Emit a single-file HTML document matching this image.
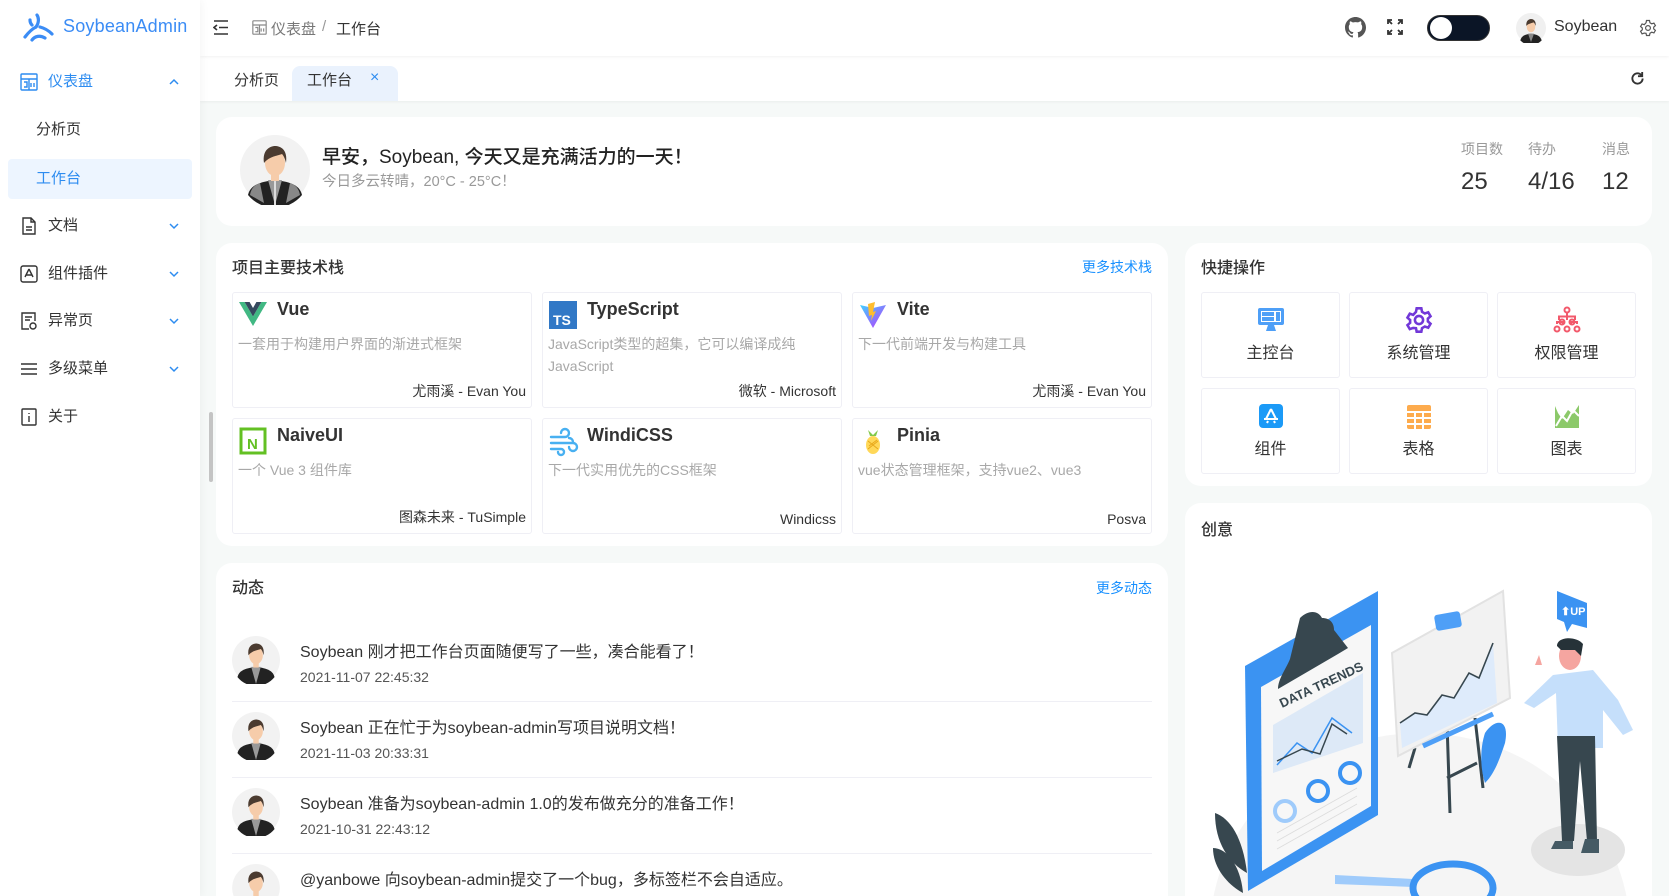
<!DOCTYPE html>
<html style="width:1669px;height:896px;overflow:hidden"><head><meta charset="utf-8">
<style>
*{box-sizing:border-box;margin:0;padding:0}
body{width:1669px;height:896px;overflow:hidden;background:#f6f9f8;font-family:"Liberation Sans","Noto Sans CJK SC",sans-serif;color:#333;position:relative;font-size:15px}
.a{position:absolute}
.side{left:0;top:0;width:200px;height:896px;background:#fff;box-shadow:2px 0 8px rgba(0,0,0,.04);z-index:3}
.mi{position:absolute;left:0;width:200px;height:40px;line-height:40px;font-size:15px;color:#333}
.mi .t{position:absolute;left:48px}
.mi svg.ic{position:absolute;left:20px;top:11px}
.mi .ch{position:absolute;left:168px;top:15px}
.hdr{left:200px;top:0;width:1469px;height:56px;background:#fff;box-shadow:0 1px 3px rgba(0,0,0,.06);z-index:2}
.tabs{left:200px;top:56px;width:1469px;height:45px;background:#fff;box-shadow:0 1px 3px rgba(0,0,0,.05);z-index:1}
.card{position:absolute;background:#fff;border-radius:16px}
.ct{position:absolute;font-size:16px;font-weight:500;color:#333}
.more{position:absolute;font-size:14px;color:#1890ff}
.gi{position:absolute;width:300px;height:116px;border:1px solid #efeff5;border-radius:3px;background:#fff}
.gi .n{position:absolute;left:44px;top:6px;font-size:18px;color:#333;font-weight:bold}
.gi .d{position:absolute;left:5px;top:40px;font-size:14px;color:#a8a8a8;line-height:22px;width:280px}
.gi .au{position:absolute;right:5px;bottom:6px;font-size:14px;color:#333}
.gi svg{position:absolute;left:6px;top:8px}
.qi{position:absolute;width:139px;height:86px;border:1px solid #efeff5;border-radius:3px;text-align:center}
.qi svg{position:absolute;left:55px;top:13px}
.qi .l{position:absolute;left:0;right:0;top:46px;font-size:16px;color:#333}
.dy{position:absolute;left:232px;width:920px;height:40px}
.dy .tx{position:absolute;left:68px;top:-4px;font-size:16px;color:#333;white-space:nowrap}
.dy .dt{position:absolute;left:68px;top:27px;font-size:14px;color:#555}
.dy svg{position:absolute;left:0;top:-6px}
.hr{position:absolute;left:232px;width:920px;height:1px;background:#efeff5}
</style></head><body>

<div class="a side">
  <svg class="a" style="left:23px;top:13px" width="32" height="30" viewBox="0 0 32 30" fill="none" stroke="#3b8cf5" stroke-width="3.2" stroke-linecap="round">
    <path d="M14 2c2 3 2 8-1 12"/><path d="M13 14c-4 2-8 6-11 10"/><path d="M17 14c4 1 8 3 12 7"/><path d="M9 27c3-4 8-5 13-2"/><path d="M7 7c0 2 1 4 2 5"/>
  </svg>
  <div class="a" style="left:63px;top:16px;font-size:18px;color:#3b8cf5;font-weight:500;letter-spacing:.2px">SoybeanAdmin</div>

  <div class="mi" style="top:62px;color:#2d8cf0"><svg class="ic" width="18" height="18" viewBox="0 0 18 18" fill="none" stroke="#2d8cf0" stroke-width="1.4"><rect x="1" y="1" width="16" height="16" rx="1"/><path d="M1 6h16M9 6v11M4 9h3v5H4M11 10v4M14 10v4"/></svg><span class="t">仪表盘</span><svg class="ch" width="12" height="10" viewBox="0 0 12 10"><path d="M2 7l4-4 4 4" fill="none" stroke="#2d8cf0" stroke-width="1.5"/></svg></div>
  <div class="mi" style="top:110px"><span class="t" style="left:36px">分析页</span></div>
  <div class="a" style="left:8px;top:159px;width:184px;height:40px;background:#edf5ff;border-radius:4px"></div>
  <div class="mi" style="top:159px;color:#2d8cf0"><span class="t" style="left:36px">工作台</span></div>

  <div class="mi" style="top:206px"><svg class="ic" width="18" height="18" viewBox="0 0 18 18" fill="none" stroke="#333" stroke-width="1.4"><path d="M3 1h8l4 4v12H3z"/><path d="M11 1v4h4M6 10h6M6 13h6"/></svg><span class="t">文档</span><svg class="ch" width="12" height="10" viewBox="0 0 12 10"><path d="M2 3l4 4 4-4" fill="none" stroke="#2d8cf0" stroke-width="1.5"/></svg></div>
  <div class="mi" style="top:254px"><svg class="ic" width="18" height="18" viewBox="0 0 18 18" fill="none" stroke="#333" stroke-width="1.4"><rect x="1" y="1" width="16" height="16" rx="2"/><path d="M9 4l-4 8M9 4l4 8M6 10h6"/></svg><span class="t">组件插件</span><svg class="ch" width="12" height="10" viewBox="0 0 12 10"><path d="M2 3l4 4 4-4" fill="none" stroke="#2d8cf0" stroke-width="1.5"/></svg></div>
  <div class="mi" style="top:301px"><svg class="ic" width="18" height="18" viewBox="0 0 18 18" fill="none" stroke="#333" stroke-width="1.4"><path d="M9 17H2V1h13v8"/><path d="M5 5h7M5 8h5"/><circle cx="13" cy="14" r="3"/></svg><span class="t">异常页</span><svg class="ch" width="12" height="10" viewBox="0 0 12 10"><path d="M2 3l4 4 4-4" fill="none" stroke="#2d8cf0" stroke-width="1.5"/></svg></div>
  <div class="mi" style="top:349px"><svg class="ic" width="18" height="18" viewBox="0 0 18 18" fill="none" stroke="#333" stroke-width="1.6"><path d="M1 4h16M1 9h16M1 14h16"/></svg><span class="t">多级菜单</span><svg class="ch" width="12" height="10" viewBox="0 0 12 10"><path d="M2 3l4 4 4-4" fill="none" stroke="#2d8cf0" stroke-width="1.5"/></svg></div>
  <div class="mi" style="top:397px"><svg class="ic" width="18" height="18" viewBox="0 0 18 18" fill="none" stroke="#333" stroke-width="1.4"><rect x="2" y="1" width="14" height="16" rx="1"/><path d="M9 5v1M9 8v6"/></svg><span class="t">关于</span></div>
</div>
<div class="a" style="left:209px;top:412px;width:4px;height:70px;background:#c4c4c4;border-radius:2px;z-index:3"></div>

<div class="a hdr">
  <svg class="a" style="left:13px;top:20px" width="16" height="15" viewBox="0 0 16 15" fill="none" stroke="#333" stroke-width="1.6"><path d="M1 1h14M6 7.5h9M1 14h14M4 5l-3 2.5 3 2.5"/></svg>
  <svg class="a" style="left:52px;top:20px" width="15" height="15" viewBox="0 0 18 18" fill="none" stroke="#888" stroke-width="1.4"><rect x="1" y="1" width="16" height="16" rx="1"/><path d="M1 6h16M9 6v11M4 9h3v5H4M11 10v4M14 10v4"/></svg>
  <div class="a" style="left:71px;top:18px;font-size:15px;color:#777">仪表盘</div>
  <div class="a" style="left:122px;top:18px;font-size:15px;color:#999">/</div>
  <div class="a" style="left:136px;top:18px;font-size:15px;color:#333">工作台</div>

  <svg class="a" style="left:1145px;top:17px" width="21" height="21" viewBox="0 0 16 16"><path fill="#555" d="M8 0C3.58 0 0 3.58 0 8c0 3.54 2.290 6.530 5.470 7.590.4.07.55-.17.55-.38v-1.330c-2.230.48-2.700-1.070-2.700-1.070-.36-.92-.89-1.170-.89-1.170-.73-.5.05-.49.05-.49.8.06 1.230.83 1.230.83.72 1.220 1.870.87 2.330.66.07-.52.28-.87.5-1.070-1.780-.2-3.640-.89-3.640-3.950 0-.87.31-1.590.82-2.150-.08-.2-.36-1.020.08-2.120 0 0 .67-.21 2.200.82A7.600 7.600 0 018 3.860c.68 0 1.360.09 2 .27 1.530-1.040 2.200-.82 2.200-.82.44 1.100.16 1.920.08 2.120.51.56.82 1.270.82 2.150 0 3.070-1.870 3.750-3.650 3.950.29.25.54.73.54 1.480v2.200c0 .21.15.46.55.38A8 8 0 0016 8c0-4.420-3.580-8-8-8z"/></svg>
  <svg class="a" style="left:1187px;top:19px" width="16" height="16" viewBox="0 0 16 16" fill="none" stroke="#333" stroke-width="1.8"><path d="M1 5V1h4M1 1l4 4M15 5V1h-4M15 1l-4 4M1 11v4h4M1 15l4-4M15 11v4h-4M15 15l-4-4"/></svg>
  <div class="a" style="left:1227px;top:15px;width:63px;height:26px;border-radius:13px;background:#0b1526;border:1px solid #333"></div>
  <div class="a" style="left:1230px;top:17px;width:22px;height:22px;border-radius:11px;background:#fff"></div>
  <svg class="a" style="left:1263px;top:20px" width="14" height="16" viewBox="0 0 14 16"><path d="M9 1a7 7 0 100 14A6 6 0 019 1z" fill="#3b8cf5"/></svg>
  <svg class="a" style="left:1316px;top:13px" width="30" height="30" viewBox="0 0 70 70"><circle cx="35" cy="35" r="35" fill="#f0f0f0"/><path d="M10 64c3-10 10-14 25-16 15 2 22 6 25 16a35 35 0 01-50 0z" fill="#222"/><path d="M28 48h14l-7 20z" fill="#888"/><ellipse cx="35" cy="32" rx="10" ry="13" fill="#f6ccaa"/><path d="M24 30c-1-12 6-16 11-16s12 3 11 16c-2-4-3-7-5-8-4 2-11 2-17 8z" fill="#4b3b30"/></svg>
  <div class="a" style="left:1354px;top:18px;font-size:16px;color:#333">Soybean</div>
  <svg class="a" style="left:1439px;top:19px" width="18" height="18" viewBox="0 0 24 24" fill="none" stroke="#555" stroke-width="1.6"><circle cx="12" cy="12" r="3.2"/><path d="M10 2h4l.6 3 2.4 1.4 2.9-1 2 3.4-2.3 2v2.4l2.3 2-2 3.4-2.9-1-2.4 1.4-.6 3h-4l-.6-3L7 18.8l-2.9 1-2-3.4 2.3-2v-2.4l-2.3-2 2-3.4 2.9 1L9.4 5z"/></svg>
</div>

<div class="a tabs">
  <div class="a" style="left:34px;top:13px;font-size:15px;color:#333">分析页</div>
  <div class="a" style="left:92px;top:10px;width:106px;height:35px;background:#eaf2fd;border-radius:8px 8px 0 0"></div>
  <div class="a" style="left:107px;top:13px;font-size:15px;color:#333">工作台</div>
  <div class="a" style="left:170px;top:13px;font-size:16px;color:#2d8cf0">×</div>
  <svg class="a" style="left:1430px;top:15px" width="15" height="15" viewBox="0 0 16 16" fill="none" stroke="#333" stroke-width="2"><path d="M13.5 8A5.5 5.5 0 118 2.5c2 0 3.5 1 4.5 2.5"/><path d="M13 1v4.5H8.5" /></svg>
</div>

<div class="card" style="left:216px;top:117px;width:1436px;height:109px">
  <svg class="a" style="left:24px;top:18px" width="70" height="70" viewBox="0 0 70 70"><circle cx="35" cy="35" r="35" fill="#f2f2f2"/><path d="M8 60c2-9 10-13 27-15 17 2 25 6 27 15a35 35 0 01-54 0z" fill="#222"/><path d="M10 60c1-6 4-10 10-12l4 20z M60 60c-1-6-4-10-10-12l-4 20z" fill="#888"/><path d="M28 45h14l-7 25z" fill="#999"/><path d="M34 46h2v24h-2z" fill="#ddd"/><rect x="31" y="38" width="8" height="8" fill="#f6ccaa"/><ellipse cx="35" cy="28" rx="10" ry="13" fill="#f6ccaa"/><path d="M24 28c-2-13 6-17 11-17s13 3 11 17c-1-5-3-8-4-9-5 2-12 2-18 9z" fill="#4b3b30"/></svg>
  <div class="a" style="left:106px;top:25px;font-size:19px;font-weight:500;color:#222">早安，Soybean, 今天又是充满活力的一天！</div>
  <div class="a" style="left:106px;top:53px;font-size:14.5px;color:#999">今日多云转晴，20°C - 25°C！</div>
  <div class="a" style="left:1245px;top:22px;font-size:14px;color:#999">项目数</div>
  <div class="a" style="left:1245px;top:51px;font-size:24px;color:#333">25</div>
  <div class="a" style="left:1312px;top:22px;font-size:14px;color:#999">待办</div>
  <div class="a" style="left:1312px;top:51px;font-size:24px;color:#333">4/16</div>
  <div class="a" style="left:1386px;top:22px;font-size:14px;color:#999">消息</div>
  <div class="a" style="left:1386px;top:51px;font-size:24px;color:#333">12</div>
</div>

<div class="card" style="left:216px;top:243px;width:952px;height:303px"></div>
<div class="ct" style="left:232px;top:254px">项目主要技术栈</div>
<div class="more" style="left:1082px;top:257px">更多技术栈</div>

<div class="gi" style="left:232px;top:292px"><svg width="28" height="26" viewBox="0 0 28 24"><path d="M0 0h5.6L14 14.5 22.4 0H28L14 24z" fill="#41b883"/><path d="M5.6 0h5L14 6l3.4-6h5L14 14.5z" fill="#35495e"/></svg><div class="n">Vue</div><div class="d">一套用于构建用户界面的渐进式框架</div><div class="au">尤雨溪 - Evan You</div></div>
<div class="gi" style="left:542px;top:292px"><svg width="28" height="28" viewBox="0 0 28 28"><rect width="28" height="28" fill="#3178c6"/><text x="4" y="24" font-family="Liberation Sans" font-weight="bold" font-size="14" fill="#fff">TS</text></svg><div class="n">TypeScript</div><div class="d">JavaScript类型的超集，它可以编译成纯JavaScript</div><div class="au">微软 - Microsoft</div></div>
<div class="gi" style="left:852px;top:292px"><svg width="28" height="28" viewBox="0 0 28 28"><defs><linearGradient id="vg" x1="0" y1="0" x2="1" y2="1"><stop offset="0" stop-color="#41d1ff"/><stop offset="1" stop-color="#bd34fe"/></linearGradient></defs><path d="M1 4l13 23L27 4 14 7z" fill="url(#vg)"/><path d="M16 1l-7 2 1 12 3-1-1 6 5-10-3 1z" fill="#ffbd2e"/></svg><div class="n">Vite</div><div class="d">下一代前端开发与构建工具</div><div class="au">尤雨溪 - Evan You</div></div>

<div class="gi" style="left:232px;top:418px"><svg width="28" height="28" viewBox="0 0 28 28"><rect x="2" y="2" width="24" height="24" fill="none" stroke="#63c023" stroke-width="3"/><text x="8" y="22" font-family="Liberation Sans" font-weight="bold" font-size="15" fill="#63c023">N</text></svg><div class="n">NaiveUI</div><div class="d">一个 Vue 3 组件库</div><div class="au">图森未来 - TuSimple</div></div>
<div class="gi" style="left:542px;top:418px"><svg width="30" height="30" viewBox="0 0 30 30" fill="none" stroke="#48b0f1" stroke-width="2.4" stroke-linecap="round"><path d="M2 10h14a4 4 0 10-4-4"/><path d="M2 16h22a4 4 0 11-4 4"/><path d="M2 22h10a3 3 0 11-3 3"/><path d="M20 11a4 4 0 014 4"/></svg><div class="n">WindiCSS</div><div class="d">下一代实用优先的CSS框架</div><div class="au">Windicss</div></div>
<div class="gi" style="left:852px;top:418px"><svg width="28" height="28" viewBox="0 0 28 28"><path d="M9 3l5 5 5-5-2 6h-6z" fill="#82c84a"/><ellipse cx="14" cy="18" rx="7" ry="9" fill="#ffd859"/><path d="M9 14l10 8M19 14L9 22M10 19l8-6" stroke="#e8a81a" stroke-width="1"/></svg><div class="n">Pinia</div><div class="d">vue状态管理框架，支持vue2、vue3</div><div class="au">Posva</div></div>

<div class="card" style="left:1185px;top:243px;width:467px;height:243px"></div>
<div class="ct" style="left:1201px;top:254px">快捷操作</div>
<div class="qi" style="left:1201px;top:292px"><svg width="28" height="28" viewBox="0 0 28 28"><rect x="1" y="2" width="26" height="17" rx="2" fill="#4e9ff7"/><rect x="4" y="5" width="20" height="11" fill="#fff"/><rect x="5" y="6" width="12" height="4" fill="#4e9ff7"/><rect x="19" y="6" width="4" height="9" fill="#4e9ff7"/><rect x="5" y="11" width="12" height="4" fill="#4e9ff7"/><path d="M11 19h6l2 6H9z" fill="#4e9ff7"/></svg><div class="l">主控台</div></div>
<div class="qi" style="left:1349px;top:292px"><svg width="28" height="28" viewBox="0 0 24 24" fill="none" stroke="#7238d8" stroke-width="2.2"><circle cx="12" cy="12" r="3.5"/><path d="M10 2h4l.6 3 2.4 1.4 2.9-1 2 3.4-2.3 2v2.4l2.3 2-2 3.4-2.9-1-2.4 1.4-.6 3h-4l-.6-3L7 18.8l-2.9 1-2-3.4 2.3-2v-2.4l-2.3-2 2-3.4 2.9 1L9.4 5z"/></svg><div class="l">系统管理</div></div>
<div class="qi" style="left:1497px;top:292px"><svg width="28" height="28" viewBox="0 0 28 28" fill="none" stroke="#f2596b" stroke-width="2"><circle cx="14" cy="4" r="2.5"/><path d="M14 6.5v4M6 14v-3.5h16V14M14 10.5V14M4 18v-2h6v2M18 18v-2h6v2"/><circle cx="9" cy="16" r="2.5"/><circle cx="19" cy="16" r="2.5"/><circle cx="4" cy="23" r="2.5"/><circle cx="14" cy="23" r="2.5"/><circle cx="24" cy="23" r="2.5"/></svg><div class="l">权限管理</div></div>
<div class="qi" style="left:1201px;top:388px"><svg width="28" height="28" viewBox="0 0 28 28"><rect x="2" y="2" width="24" height="24" rx="4" fill="#1b9af7"/><path d="M14 7l-5 10M14 7l5 10M7 17h14M10 21l1-2M18 21l-1-2" stroke="#fff" stroke-width="2" fill="none"/></svg><div class="l">组件</div></div>
<div class="qi" style="left:1349px;top:388px"><svg width="28" height="28" viewBox="0 0 28 28"><rect x="2" y="3" width="24" height="24" rx="2" fill="#fdab4d"/><path d="M2 10h24M2 16h24M2 22h24M10 10v17M18 10v17" stroke="#fff" stroke-width="2"/></svg><div class="l">表格</div></div>
<div class="qi" style="left:1497px;top:388px"><svg width="28" height="28" viewBox="0 0 28 28"><path d="M2 4v22h24V3l-6 9-5-4-6 9-4-6z" fill="#8cc96a"/><path d="M3 24l6-10 5 5 6-11 6 6" stroke="#fff" stroke-width="2" fill="none"/></svg><div class="l">图表</div></div>

<div class="card" style="left:1185px;top:503px;width:467px;height:393px;overflow:hidden;border-radius:16px 16px 0 0">
  <div class="ct" style="left:16px;top:13px">创意</div>
  <svg class="a" style="left:0;top:0" width="467" height="393" viewBox="0 0 467 393">
    <ellipse cx="235" cy="430" rx="210" ry="200" fill="#f5f5f5"/>
    <ellipse cx="393" cy="347" rx="47" ry="26" fill="#e4e4e4"/>
    <path d="M30 310c15 5 28 25 32 60-18-10-32-30-32-60z" fill="#37474f"/>
    <path d="M28 345c15 0 28 20 30 45-15-8-30-25-30-45z" fill="#37474f"/>
    <path d="M60 163L193 88V312L63 388z" fill="#3b93f2"/>
    <path d="M76 184L186 122V303L77 368z" fill="#f7f7f7"/>
    <path d="M88 222L178 170V240L88 270z" fill="#dde9f7"/>
    <path d="M92 262l20-22 15 10 20-35 20 15" stroke="#3b93f2" stroke-width="1.5" fill="none"/>
    <path d="M92 258l25-12 18 5 12-30 15 10" stroke="#37474f" stroke-width="1.5" fill="none"/>
    <path d="M115 115c8-8 18-8 22 0 8 0 12 5 12 12l14 18-10 6-60 35c0-10 8-20 12-30z" fill="#37474f"/>
    <text x="97" y="205" font-family="Liberation Sans" font-weight="bold" font-size="13" fill="#37474f" transform="rotate(-25 97 205)">DATA TRENDS</text>
    <circle cx="100" cy="308" r="10" fill="none" stroke="#9fcbfb" stroke-width="4"/>
    <circle cx="133" cy="288" r="10" fill="none" stroke="#3b93f2" stroke-width="4"/>
    <circle cx="165" cy="270" r="10" fill="none" stroke="#3b93f2" stroke-width="4"/>
    <path d="M92 330l80-45M92 338l80-45M92 346l80-45" stroke="#ddd" stroke-width="1"/>
    <path d="M230 245l-6 20M262 220l3 90M290 215l8 70M262 275l30-15" stroke="#37474f" stroke-width="3"/>
    <path d="M207 150L318 88L325 195L213 253z" fill="#f2f2f2" stroke="#e2e2e2" stroke-width="2"/>
    <path d="M215 220l15-10 12 2 15-20 12 3 15-25 10 5 14-35 4 60-95 45z" fill="#deebfb"/>
    <path d="M215 220l15-10 12 2 15-20 12 3 15-25 10 5 14-35" stroke="#37474f" stroke-width="1.6" fill="none"/>
    <rect x="250" y="110" width="26" height="16" rx="3" fill="#4e9ff7" transform="rotate(-10 263 118)"/>
    <path d="M238 243l70-32" stroke="#4e9ff7" stroke-width="5"/>
    <path d="M300 230c10-15 25-15 20 10-5 15-10 30-20 40-5-15-5-35 0-50z" fill="#3b93f2"/>
    <path d="M372 88l30 12v25l-15-4-5 8-3-10-7-3z" fill="#3b93f2"/>
    <text x="376" y="112" font-family="Liberation Sans" font-weight="bold" font-size="11" fill="#fff">⬆UP</text>
    <path d="M368 172l40-5 25 30 15 30-10 5-20-25v38h-45l-2-55-22 15-10-5z" fill="#c5dffb"/>
    <path d="M350 162l4-10 3 10z" fill="#f5a5a0"/>
    <ellipse cx="385" cy="153" rx="11" ry="14" fill="#f5a5a0"/>
    <path d="M372 143c0-10 20-10 26-2l-2 12-6-6-14 0z" fill="#263238"/>
    <path d="M372 233h38l2 105h-10l-7-80-6 80h-12z" fill="#37474f"/>
    <path d="M370 338h18v8h-22zM400 336h14v14h-18z" fill="#455a64"/>
    <path d="M150 372l78 4v8l-78-3z" fill="#9fcbfb"/>
    <ellipse cx="268" cy="385" rx="40" ry="24" fill="none" stroke="#3b93f2" stroke-width="7"/>
  </svg>
</div>

<div class="card" style="left:216px;top:563px;width:952px;height:333px;border-radius:16px 16px 0 0"></div>
<div class="ct" style="left:232px;top:574px">动态</div>
<div class="more" style="left:1096px;top:578px">更多动态</div>

<div class="dy" style="top:642px"><svg width="48" height="48" viewBox="0 0 70 70"><circle cx="35" cy="35" r="35" fill="#f2f2f2"/><path d="M8 60c2-9 10-13 27-15 17 2 25 6 27 15a35 35 0 01-54 0z" fill="#222"/><path d="M28 45h14l-7 25z" fill="#999"/><rect x="31" y="38" width="8" height="8" fill="#f6ccaa"/><ellipse cx="35" cy="28" rx="10" ry="13" fill="#f6ccaa"/><path d="M24 28c-2-13 6-17 11-17s13 3 11 17c-1-5-3-8-4-9-5 2-12 2-18 9z" fill="#4b3b30"/></svg><div class="tx">Soybean 刚才把工作台页面随便写了一些，凑合能看了！</div><div class="dt">2021-11-07 22:45:32</div></div>
<div class="hr" style="top:701px"></div>
<div class="dy" style="top:718px"><svg width="48" height="48" viewBox="0 0 70 70"><circle cx="35" cy="35" r="35" fill="#f2f2f2"/><path d="M8 60c2-9 10-13 27-15 17 2 25 6 27 15a35 35 0 01-54 0z" fill="#222"/><path d="M28 45h14l-7 25z" fill="#999"/><rect x="31" y="38" width="8" height="8" fill="#f6ccaa"/><ellipse cx="35" cy="28" rx="10" ry="13" fill="#f6ccaa"/><path d="M24 28c-2-13 6-17 11-17s13 3 11 17c-1-5-3-8-4-9-5 2-12 2-18 9z" fill="#4b3b30"/></svg><div class="tx">Soybean 正在忙于为soybean-admin写项目说明文档！</div><div class="dt">2021-11-03 20:33:31</div></div>
<div class="hr" style="top:777px"></div>
<div class="dy" style="top:794px"><svg width="48" height="48" viewBox="0 0 70 70"><circle cx="35" cy="35" r="35" fill="#f2f2f2"/><path d="M8 60c2-9 10-13 27-15 17 2 25 6 27 15a35 35 0 01-54 0z" fill="#222"/><path d="M28 45h14l-7 25z" fill="#999"/><rect x="31" y="38" width="8" height="8" fill="#f6ccaa"/><ellipse cx="35" cy="28" rx="10" ry="13" fill="#f6ccaa"/><path d="M24 28c-2-13 6-17 11-17s13 3 11 17c-1-5-3-8-4-9-5 2-12 2-18 9z" fill="#4b3b30"/></svg><div class="tx">Soybean 准备为soybean-admin 1.0的发布做充分的准备工作！</div><div class="dt">2021-10-31 22:43:12</div></div>
<div class="hr" style="top:853px"></div>
<div class="dy" style="top:870px;height:26px;overflow:hidden"><div class="tx" style="top:-4px">@yanbowe 向soybean-admin提交了一个bug，多标签栏不会自适应。</div></div>
<svg class="a" style="left:232px;top:864px" width="48" height="32" viewBox="0 0 70 47"><circle cx="35" cy="35" r="35" fill="#f2f2f2"/><rect x="31" y="38" width="8" height="9" fill="#f6ccaa"/><ellipse cx="35" cy="28" rx="10" ry="13" fill="#f6ccaa"/><path d="M24 28c-2-13 6-17 11-17s13 3 11 17c-1-5-3-8-4-9-5 2-12 2-18 9z" fill="#4b3b30"/></svg>

</body></html>
